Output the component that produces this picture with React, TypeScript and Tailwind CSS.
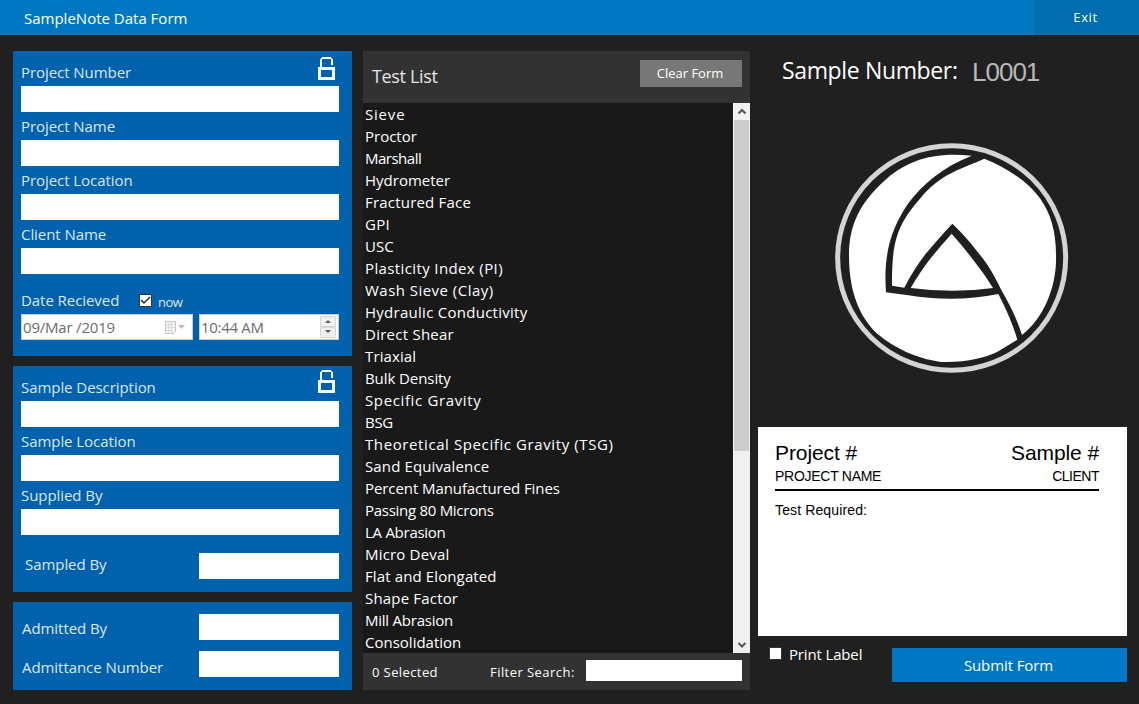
import React from "react";

const tests: [string, string][] = [
  ["Sieve", "tracking-[0.8px]"],
  ["Proctor", ""],
  ["Marshall", "tracking-[-0.5px]"],
  ["Hydrometer", ""],
  ["Fractured Face", "tracking-[0.2px]"],
  ["GPI", "tracking-[0.3px]"],
  ["USC", ""],
  ["Plasticity Index (PI)", "tracking-[0.38px]"],
  ["Wash Sieve (Clay)", "tracking-[0.47px]"],
  ["Hydraulic Conductivity", "tracking-[0.27px]"],
  ["Direct Shear", "tracking-[0.25px]"],
  ["Triaxial", "tracking-[0.12px]"],
  ["Bulk Density", "tracking-[-0.08px]"],
  ["Specific Gravity", "tracking-[0.63px]"],
  ["BSG", "tracking-[-0.3px]"],
  ["Theoretical Specific Gravity (TSG)", "tracking-[0.6px]"],
  ["Sand Equivalence", "tracking-[0.13px]"],
  ["Percent Manufactured Fines", "tracking-[-0.08px]"],
  ["Passing 80 Microns", "tracking-[-0.28px]"],
  ["LA Abrasion", "tracking-[-0.27px]"],
  ["Micro Deval", "tracking-[0.18px]"],
  ["Flat and Elongated", "tracking-[0.12px]"],
  ["Shape Factor", "tracking-[0.18px]"],
  ["Mill Abrasion", "tracking-[-0.23px]"],
  ["Consolidation", ""],
];

function Lock({ className }: { className: string }) {
  return (
    <svg className={className} width="17" height="23" viewBox="0 0 17 23" fill="#fff" shapeRendering="crispEdges">
      <path d="M2 10V2H3V1H4V0H13V1H14V2H15V8H13V2H4V10Z" />
      <path fillRule="evenodd" d="M0 10H17V23H0ZM3 13V20H14V13Z" />
    </svg>
  );
}

function Field({ label }: { label: string }) {
  return (
    <label className="block">
      <span className="block h-7 leading-7">{label}</span>
      <input className="block h-[26px] w-full bg-white outline-none" />
    </label>
  );
}

export default function App() {
  return (
    <div className="flex h-[704px] w-[1139px] flex-col overflow-hidden whitespace-nowrap bg-[#202020] font-['Open_Sans',sans-serif] text-white">
      <header className="flex h-[35px] shrink-0 bg-[#0077c0]">
        <h1 className="flex-1 pl-6 text-[15px] leading-[37px]">SampleNote Data Form</h1>
        <button className="w-[105px] pt-px pr-0.5 bg-[#006dae] text-[13px] tracking-[0.6px]">Exit</button>
      </header>
      <main className="flex flex-1 pt-4 pl-[13px]">
        <div className="flex w-[339px] flex-col gap-[10px] text-[15px] tracking-[-0.06px] text-[#dfe6ee]">
          <section className="flex h-[305px] flex-col bg-[#0062ac] pt-[7px] pr-[13px] pl-2">
            <div className="relative">
              <Lock className="absolute top-[-1px] right-[4px]" />
              <Field label="Project Number" />
            </div>
            <Field label="Project Name" />
            <Field label="Project Location" />
            <Field label="Client Name" />
            <div className="mt-3 flex h-7 items-center">
              <span className="w-[118px]">Date Recieved</span>
              <span className="mt-px flex h-[13px] w-[13px] items-center justify-center border border-[#333] bg-white">
                <svg width="11" height="11" viewBox="0 0 11 11" fill="none">
                  <path d="M1 5L4 8L10 2" stroke="#222" strokeWidth="1.4" />
                </svg>
              </span>
              <span className="pt-[5px] pl-1.5 text-[13px] tracking-[-0.5px]">now</span>
            </div>
            <div className="flex gap-1.5 text-[#6d6d6d]">
              <div className="flex h-[26px] w-[172px] items-center border border-[#ccc] bg-white pl-px">
                <span className="flex-1 tracking-[-0.2px]">09/Mar /2019</span>
                <svg width="22" height="14" viewBox="0 0 22 14" className="mt-0.5 mr-[5px]">
                  <path d="M.5.5H10.500V10L8.500 12.500H.5Z" fill="#f4f4f4" stroke="#c8c4c4" />
                  <path d="M2 3.500H9M2 6.500H9M2 9.500H8M3.500 2V11M6.500 2V11" stroke="#d6dae2" />
                  <path d="M13 4H20L16.500 8Z" fill="#bbb" />
                </svg>
              </div>
              <div className="flex h-[26px] w-[140px] items-center border border-[#ccc] bg-white pl-px">
                <span className="flex-1 tracking-[-0.3px]">10:44 AM</span>
                <svg width="16" height="22" viewBox="0 0 16 22" className="mr-0.5">
                  <path d="M.5.5H15.500V10.500H.5ZM.5 11.500H15.500V21.500H.5Z" fill="#f0f0f0" stroke="#d6d6d6" />
                  <path d="M5 7H11L8 4ZM5 14H11L8 17Z" fill="#606060" />
                </svg>
              </div>
            </div>
          </section>
          <section className="flex h-[226px] flex-col bg-[#0062ac] pt-[7px] pr-[13px] pl-2">
            <div className="relative">
              <Lock className="absolute top-[-3px] right-[4px]" />
              <Field label="Sample Description" />
            </div>
            <Field label="Sample Location" />
            <Field label="Supplied By" />
            <label className="mt-[18px] flex justify-between pl-1">
              <span>Sampled By</span>
              <input className="h-[26px] w-[140px] bg-white outline-none" />
            </label>
          </section>
          <section className="flex h-[88px] flex-col gap-[11px] bg-[#0062ac] pt-3 pr-[13px] pl-[9px]">
            <label className="flex justify-between">
              <span className="h-[26px] leading-7">Admitted By</span>
              <input className="h-[26px] w-[140px] bg-white outline-none" />
            </label>
            <label className="flex justify-between">
              <span className="h-[26px] leading-[33px]">Admittance Number</span>
              <input className="h-[26px] w-[140px] bg-white outline-none" />
            </label>
          </section>
        </div>
        <section className="ml-[11px] flex h-[639px] w-[387px] flex-col bg-[#323232]">
          <div className="flex h-[52px] items-start justify-between pr-2 pl-[9px]">
            <h2 className="text-[18px] leading-[50px] tracking-[-0.33px] text-[#e4e4e4]">Test List</h2>
            <button className="mt-[9px] h-[27px] w-[102px] bg-[#777] pr-0.5 text-[13px]">Clear Form</button>
          </div>
          <div className="flex h-[550px] bg-[#191919]">
            <ul className="flex-1 pl-0.5 text-[15px] leading-[22px]">
              {tests.map(([name, tracking]) => (
                <li key={name} className={tracking}>{name}</li>
              ))}
            </ul>
            <div className="flex w-[17px] flex-col border-l border-white bg-[#f0f0f0]">
              <svg width="16" height="17" viewBox="0 0 16 17" fill="none">
                <path d="M4.500 10.500L8 7L11.500 10.500" stroke="#555" strokeWidth="2" />
              </svg>
              <div className="h-[331px] w-[15px] bg-[#cdcdcd]" />
              <svg width="16" height="17" viewBox="0 0 16 17" fill="none" className="mt-auto">
                <path d="M4.500 7L8 10.500L11.500 7" stroke="#555" strokeWidth="2" />
              </svg>
            </div>
          </div>
          <div className="flex h-[37px] items-center pr-2 pl-[9px] text-[13px]">
            <span className="w-[118px] pt-0.5 tracking-[0.4px]">0 Selected</span>
            <span className="flex-1 pt-0.5 tracking-[0.45px]">Filter Search:</span>
            <input className="-mt-0.5 h-[21px] w-[156px] bg-white outline-none" />
          </div>
        </section>
        <aside className="ml-2 flex w-[369px] flex-col">
          <div className="flex h-10 pl-6">
            <span className="w-[190px] text-[23px] leading-[38px] tracking-[-0.36px]">Sample Number:</span>
            <span className="font-['Liberation_Sans',sans-serif] text-[26px] leading-[42px] tracking-[-1px] text-[#b8b8b8]">L0001</span>
          </div>
          <svg width="260" height="260" viewBox="0 0 780 780" className="mt-[39px] ml-[62px] shrink-0" fill="none">
            <ellipse cx="395" cy="384" rx="342" ry="337" stroke="#d4d4d4" strokeWidth="15" />
            <path fill="#fff" d="M455 77C340 65 260 90 190 155C120 220 86 285 87 380C88 490 120 560 170 610C235 665 310 690 365 696C440 698 495 683 530 667L592 629C578 580 555 530 535 492C450 510 350 510 265 496L198 487C190 380 210 300 265 220C310 160 370 110 455 77Z" />
            <path fill="#fff" d="M493 86C550 108 620 150 660 205C695 255 710 310 708 395C706 470 675 560 606 615C590 565 570 525 544 480C520 430 500 398 470 362Q440 322 397 281Q360 320 316 373Q280 420 253 473L216 467C215 340 230 285 300 206C360 130 430 115 493 86Z" />
            <path fill="#fff" d="M395 311Q430 350 462 393Q492 430 519 474Q400 491 272 474Q300 427 325 394Q355 355 395 311Z" />
          </svg>
          <div className="mt-[37px] h-[209px] bg-white pt-3 pr-7 pl-[17px] font-['Liberation_Sans',sans-serif] text-black">
            <div className="flex justify-between text-[21px] leading-7 tracking-[-0.1px]"><span>Project #</span><span>Sample #</span></div>
            <div className="flex h-[24px] justify-between border-b-2 border-black text-[14px] leading-[19px] tracking-[-0.27px]"><span>PROJECT NAME</span><span className="tracking-[-0.5px]">CLIENT</span></div>
            <div className="mt-[9px] text-[14px] leading-5 tracking-[0.13px]">Test Required:</div>
          </div>
          <div className="mt-3 flex h-[34px]">
            <span className="-mt-px ml-[11px] h-[13px] w-[13px] border border-[#333] bg-white" />
            <span className="ml-[7px] w-[103px] text-[15px] leading-[12px] tracking-[-0.15px]">Print Label</span>
            <button className="flex-1 bg-[#0077c0] pr-0.5 text-[15px] tracking-[-0.1px]">Submit Form</button>
          </div>
        </aside>
      </main>
    </div>
  );
}
